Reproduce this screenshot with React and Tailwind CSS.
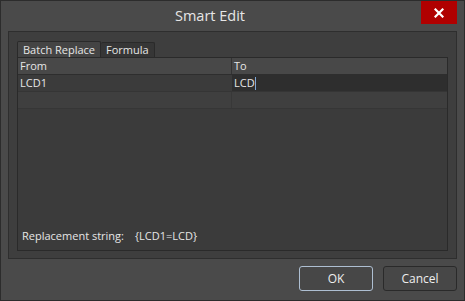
import React from "react";

export default function App() {
  return (
    <div
      className="w-[465px] h-[301px] bg-[#4a4a4a] border border-[#2c2c2c] flex flex-col text-[#e6e6e6] overflow-hidden"
      style={{ fontFamily: '"Open Sans", "Noto Sans", sans-serif' }}
    >
      {/* Title bar */}
      <div className="h-[30px] flex items-start relative">
        <div className="flex-1 text-center text-[14.5px] leading-[30px] pr-[45px]">Smart Edit</div>
        <div className="absolute right-[7px] top-0 w-[36px] h-[23px] bg-[#b00000] flex items-center justify-center">
          <svg width="10" height="10" viewBox="0 0 10 10">
            <path d="M1.5 1.5 L8.5 8.5 M8.5 1.5 L1.5 8.5" stroke="#fff" strokeWidth="2.2" strokeLinecap="square" />
          </svg>
        </div>
      </div>
      {/* Inner panel */}
      <div className="mx-[7px] h-[228px] bg-[#3e3e3e] border border-[#2e2e2e] flex flex-col px-[8px] pt-[9px]">
        {/* Tabs */}
        <div className="flex items-end h-[16px] text-[11px]">
          <div className="w-[84px] h-[16px] pl-[5px] bg-[#444444] border border-b-0 border-[#2a2a2a] rounded-t-[2px] leading-[15px]">
            Batch Replace
          </div>
          <div className="w-[54px] h-[15px] pl-[5px] bg-[#363636] border border-b-0 border-l-0 border-[#2a2a2a] rounded-t-[2px] leading-[14px]">
            Formula
          </div>
        </div>
        <div className="h-[194px] bg-[#3b3b3b] border border-[#2a2a2a] flex flex-col">
          {/* Header */}
          <div className="h-[17px] flex bg-[#484848] border-b border-[#2e2e2e] text-[11px] leading-[16px]">
            <div className="w-[214px] pl-[2px] border-r border-[#333]">From</div>
            <div className="flex-1 pl-[2px]">To</div>
          </div>
          {/* Row 1 */}
          <div className="h-[17px] flex text-[11px] leading-[16px] border-b border-[#353535]">
            <div className="w-[214px] pl-[2px] bg-[#3b3b3b]">LCD1</div>
            <div className="flex-1 pl-[2px] bg-[#2e2e2e] flex items-center">
              <span>LCD</span>
              <span className="inline-block w-[1px] h-[13px] bg-[#7fa8d8]"></span>
            </div>
          </div>
          {/* Row 2 */}
          <div className="h-[17px] flex bg-[#3f3f3f] border-b border-[#363636]">
            <div className="w-[214px] border-r border-[#383838]"></div>
            <div className="flex-1"></div>
          </div>
          <div className="flex-1"></div>
          <div className="h-[28px] px-[4px] text-[11px] flex items-center">
            <span>Replacement string:</span>
            <span className="ml-[11px]">{"{LCD1=LCD}"}</span>
          </div>
        </div>
      </div>
      {/* Buttons */}
      <div className="flex justify-end gap-[10px] pr-[7px] pt-[7px]">
        <button className="w-[74px] h-[25px] rounded-[3px] bg-[#474747] border border-[#aebfd2] text-[12px] text-[#eeeeee]">
          OK
        </button>
        <button className="w-[74px] h-[25px] rounded-[3px] bg-[#474747] border border-[#2a2a2a] text-[12px] text-[#eeeeee]">
          Cancel
        </button>
      </div>
    </div>
  );
}
